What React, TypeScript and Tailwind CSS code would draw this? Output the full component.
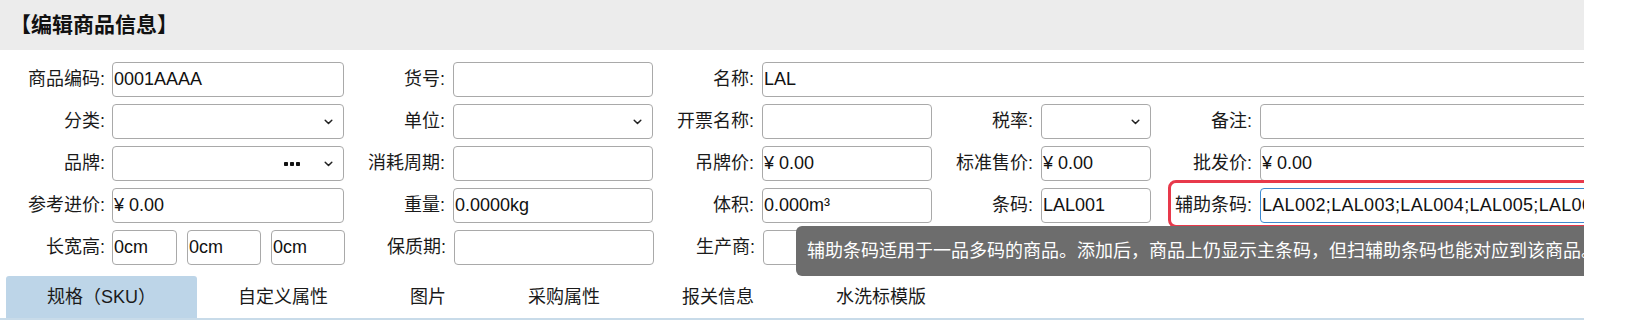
import type { ReactNode } from "react";

const BOX =
  "shrink-0 h-[35px] border border-[#a9a9a9] rounded-[4px] bg-white flex items-center pl-[1px] whitespace-nowrap overflow-hidden text-[#111]";

function Label({ text, first }: { text: string; first?: boolean }) {
  return (
    <div className={first ? "shrink-0 w-[112px] text-right pr-[7px]" : "shrink-0 w-[109px] text-right pr-[8px]"}>
      {text}
    </div>
  );
}

function Chevron() {
  return (
    <svg width="9" height="6" viewBox="0 0 9 6" className="shrink-0">
      <path d="M1.2 1.2l3.3 3.3 3.3-3.3" fill="none" stroke="#222" strokeWidth="1.5" strokeLinecap="round" strokeLinejoin="round" />
    </svg>
  );
}

function Select({ className, dots }: { className: string; dots?: boolean }) {
  return (
    <div className={`${BOX} ${className} justify-end pr-[10px]`}>
      {dots && (
        <svg width="16" height="4" viewBox="0 0 16 4" className="mr-[24px]">
          <rect x="0" y="0" width="4" height="4" rx="0.8" fill="#111" />
          <rect x="6" y="0" width="4" height="4" rx="0.8" fill="#111" />
          <rect x="12" y="0" width="4" height="4" rx="0.8" fill="#111" />
        </svg>
      )}
      <Chevron />
    </div>
  );
}

function Input({ className, children }: { className: string; children?: ReactNode }) {
  return <div className={`${BOX} ${className}`}>{children}</div>;
}

const TABS = ["规格（SKU）", "自定义属性", "图片", "采购属性", "报关信息", "水洗标模版"];

export default function App() {
  return (
    <div className="w-[1646px] h-[321px] bg-white font-['Liberation_Sans','Noto_Sans_CJK_SC',sans-serif] text-[18px] text-[#1a1a1a]">
      <div className="relative w-[1584px] h-[321px] overflow-hidden">
        {/* Header */}
        <div className="h-[50px] bg-[#ececec] flex items-center pl-[10px]">
          <span className="text-[21px] font-bold text-[#111]">【编辑商品信息】</span>
        </div>

        {/* Form rows */}
        <div className="mt-[12px] flex flex-col gap-[7px]">
          <div className="flex items-center">
            <Label text="商品编码:" first />
            <Input className="w-[232px]">0001AAAA</Input>
            <Label text="货号:" />
            <Input className="w-[200px]" />
            <Label text="名称:" />
            <Input className="w-[900px]">LAL</Input>
          </div>

          <div className="flex items-center">
            <Label text="分类:" first />
            <Select className="w-[232px]" />
            <Label text="单位:" />
            <Select className="w-[200px]" />
            <Label text="开票名称:" />
            <Input className="w-[170px]" />
            <Label text="税率:" />
            <Select className="w-[110px]" />
            <Label text="备注:" />
            <Input className="w-[600px]" />
          </div>

          <div className="flex items-center">
            <Label text="品牌:" first />
            <Select className="w-[232px]" dots />
            <Label text="消耗周期:" />
            <Input className="w-[200px]" />
            <Label text="吊牌价:" />
            <Input className="w-[170px]">¥ 0.00</Input>
            <Label text="标准售价:" />
            <Input className="w-[110px]">¥ 0.00</Input>
            <Label text="批发价:" />
            <Input className="w-[600px]">¥ 0.00</Input>
          </div>

          <div className="flex items-center">
            <Label text="参考进价:" first />
            <Input className="w-[232px]">¥ 0.00</Input>
            <Label text="重量:" />
            <Input className="w-[200px]">0.0000kg</Input>
            <Label text="体积:" />
            <Input className="w-[170px]">0.000m³</Input>
            <Label text="条码:" />
            <Input className="w-[110px]">LAL001</Input>
            <Label text="辅助条码:" />
            <div className="shrink-0 w-[600px] h-[35px] border-[1.5px] border-[#3e8ad0] rounded-[4px] bg-white flex items-center pl-[1px] whitespace-nowrap overflow-hidden text-[#111] tracking-[0.3px]">
              LAL002;LAL003;LAL004;LAL005;LAL006;LAL007
            </div>
          </div>

          <div className="flex items-center">
            <Label text="长宽高:" first />
            <Input className="w-[65px]">0cm</Input>
            <Input className="w-[74px] ml-[10px]">0cm</Input>
            <Input className="w-[74px] ml-[10px]">0cm</Input>
            <Label text="保质期:" />
            <Input className="w-[200px]" />
            <Label text="生产商:" />
            <Input className="w-[170px]" />
          </div>
        </div>

        {/* Tabs */}
        <div className="mt-[11px] flex pl-[6px] border-b-2 border-[#c8dbe9]">
          {TABS.map((t, i) => (
            <div
              key={t}
              className={`h-[42px] px-[41px] flex items-center whitespace-nowrap ${
                i === 0 ? "bg-[#bdd5e8] rounded-t-[3px]" : ""
              }`}
            >
              {t}
            </div>
          ))}
        </div>

        {/* Highlight around 辅助条码 */}
        <div className="absolute left-[1168px] top-[180px] w-[600px] h-[48px] border-[3px] border-[#e8394b] rounded-[8px]" />

        {/* Tooltip */}
        <div className="absolute left-[796px] top-[226px] w-[900px] h-[50px] rounded-[6px] bg-[#6d6d6d] text-white flex items-center pl-[11px] whitespace-nowrap">
          辅助条码适用于一品多码的商品。添加后，商品上仍显示主条码，但扫辅助条码也能对应到该商品。
        </div>
      </div>
    </div>
  );
}
